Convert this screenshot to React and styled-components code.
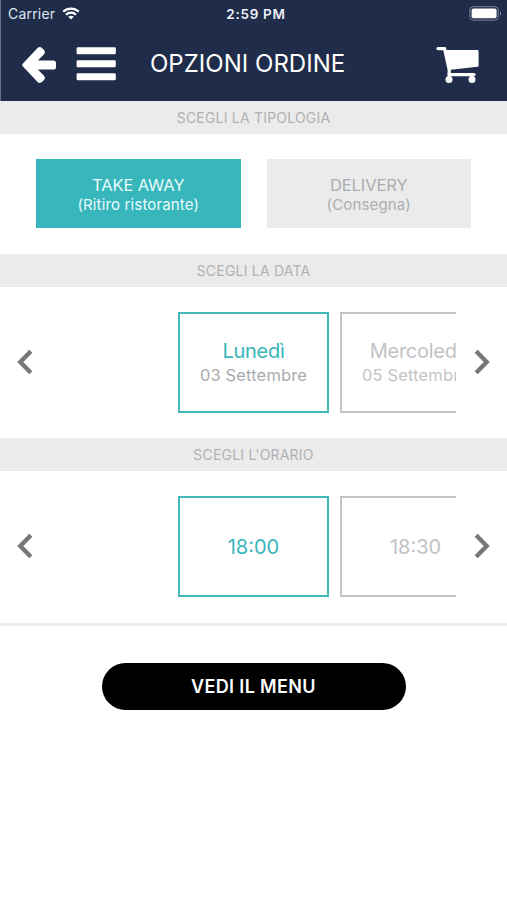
import React from "react";
import styled, { createGlobalStyle } from "styled-components";

const types = [
    { title: "TAKE AWAY", note: "(Ritiro ristorante)", active: true },
    { title: "DELIVERY", note: "(Consegna)", active: false },
];

const dates = [
    { day: "Lunedì", date: "03 Settembre", active: true },
    { day: "Mercoledì", date: "05 Settembre", active: false },
];

const times = [
    { hour: "18:00", active: true },
    { hour: "18:30", active: false },
];

const Chevron = ({ right }) => (
    <ArrowButton $right={right} aria-label={right ? "Avanti" : "Indietro"}>
        <svg width="18" height="28" viewBox="0 0 18 28" fill="none" stroke="#777" strokeWidth="4.4">
            <path d={right ? "M3.2 3.3 13.7 14 3.2 24.7" : "M14.8 3.3 4.3 14 14.8 24.7"} />
        </svg>
    </ArrowButton>
);

const App = () => {

    return(
        <Screen>
            <GlobalStyle />
            <Header>
                <StatusBar>
                    <Carrier>
                        <span>Carrier</span>
                        <svg width="18" height="13" viewBox="0 0 18 13" fill="none" stroke="#fff" strokeWidth="2.2">
                            <path d="M1.2 4.6C5.6.5 12.4.5 16.8 4.6" />
                            <path d="M4 7.7c2.8-2.7 7.2-2.7 10 0" />
                            <path d="M9 12.6 6.2 9.8c1.6-1.5 4-1.5 5.6 0z" fill="#fff" stroke="none" />
                        </svg>
                    </Carrier>
                    <Clock>2:59 PM</Clock>
                    <Battery>
                        <svg width="33" height="15" viewBox="0 0 33 15">
                            <rect x="0.9" y="0.7" width="28.4" height="13.4" rx="3.4" fill="none" stroke="#7d869b" strokeWidth="1" />
                            <rect x="2.6" y="2.5" width="25" height="9.8" rx="1.8" fill="#fff" />
                            <path d="M31 5.2c1.5.6 1.5 3.8 0 4.4z" fill="#7d869b" />
                        </svg>
                    </Battery>
                </StatusBar>
                <NavBar>
                    <NavIcons>
                        <svg width="35" height="38" viewBox="0 0 35 38" fill="#fff">
                            <path d="M.9 17.4 15.6 2q2.2-2 4.6.2l1.6 1.6q2.2 2.4 0 4.6l-6 6h15.6q2.6 0 2.6 2.6v4q0 2.6-2.6 2.6H15.8l6 6q2.2 2.2 0 4.6l-1.6 1.6q-2.4 2.2-4.6.2L.9 20.6q-1.4-1.6 0-3.2z" />
                        </svg>
                        <svg width="40" height="38" viewBox="0 0 40 38" fill="#fff">
                            <rect x="0.6" y="1.2" width="39.2" height="7" rx="1.2" />
                            <rect x="0.6" y="14.3" width="39.2" height="7" rx="1.2" />
                            <rect x="0.6" y="27.2" width="39.2" height="7" rx="1.2" />
                        </svg>
                    </NavIcons>
                    <Title>OPZIONI ORDINE</Title>
                    <Cart>
                        <svg width="44" height="38" viewBox="0 0 44 38" fill="#fff">
                            <path d="M2 2.6h6.6L13.2 24v4.6H38" fill="none" stroke="#fff" strokeWidth="3.2" strokeLinecap="round" strokeLinejoin="round" />
                            <path d="M9.4 4h31.8q1.4 0 1.4 1.4v14q0 1.3-1.2 1.4L12.4 24z" />
                            <circle cx="13" cy="33.5" r="3.5" />
                            <circle cx="36" cy="33.5" r="3.5" />
                            <path d="M11.6 27h3v6h-3zM34.6 28h3v5h-3z" />
                        </svg>
                    </Cart>
                </NavBar>
            </Header>

            <SectionTitle>SCEGLI LA TIPOLOGIA</SectionTitle>
            <TypeRow>
                {types.map((t) => (
                    <TypeButton key={t.title} $active={t.active}>
                        <TypeName>{t.title}</TypeName>
                        <TypeNote>{t.note}</TypeNote>
                    </TypeButton>
                ))}
            </TypeRow>

            <SectionTitle>SCEGLI LA DATA</SectionTitle>
            <Slider>
                <Chevron />
                <Track>
                    {dates.map((d) => (
                        <Card key={d.date} $active={d.active}>
                            <Day>{d.day}</Day>
                            <DateText $active={d.active}>{d.date}</DateText>
                        </Card>
                    ))}
                </Track>
                <Chevron right />
            </Slider>

            <SectionTitle>SCEGLI L'ORARIO</SectionTitle>
            <Slider>
                <Chevron />
                <Track>
                    {times.map((t) => (
                        <Card key={t.hour} $active={t.active}>
                            <Hour>{t.hour}</Hour>
                        </Card>
                    ))}
                </Track>
                <Chevron right />
            </Slider>

            <Footer>
                <MenuButton>VEDI IL MENU</MenuButton>
            </Footer>
        </Screen>
    );
};

const GlobalStyle = createGlobalStyle`
    * {
        box-sizing: border-box;
    }
    body {
        margin: 0;
        background: #fff;
    }
    button {
        font: inherit;
        border: 0;
        padding: 0;
        background: none;
    }
    svg {
        display: block;
    }
`;

const Screen = styled.main`
    width: 507px;
    height: 900px;
    overflow: hidden;
    display: flex;
    flex-direction: column;
    background: #fff;
    font-family: Inter, "Liberation Sans", sans-serif;
`;

const Header = styled.header`
    flex: none;
    height: 101px;
    background: #1f2d4b;
    border-left: 1px solid #68738a;
    color: #fff;
`;

const StatusBar = styled.div`
    height: 27px;
    display: grid;
    grid-template-columns: 1fr auto 1fr;
    align-items: center;
    padding: 0 5px 0 7px;
`;

const Carrier = styled.div`
    display: flex;
    align-items: center;
    gap: 7px;
    font-size: 14px;
    letter-spacing: 0.2px;
    color: #dfe5f0;
`;

const Clock = styled.div`
    padding-left: 2px;
    font-size: 13.5px;
    font-weight: 600;
    letter-spacing: 0.7px;
    color: #eef1f7;
`;

const Battery = styled.div`
    justify-self: end;
`;

const NavBar = styled.nav`
    height: 74px;
    display: flex;
    align-items: flex-start;
    padding: 19px 27px 0 21px;
`;

const NavIcons = styled.div`
    display: flex;
    gap: 19px;
    width: 128px;
`;

const Title = styled.h1`
    flex: 1;
    margin: 0;
    font-size: 24px;
    font-weight: 400;
    line-height: 36px;
    letter-spacing: 0.02px;
    white-space: nowrap;
`;

const Cart = styled.div`
    flex: none;
`;

const SectionTitle = styled.h2`
    flex: none;
    height: 33px;
    margin: 0;
    background: #ebebeb;
    color: #b1b1b4;
    font-size: 14px;
    font-weight: 400;
    line-height: 33px;
    letter-spacing: 0.2px;
    text-align: center;
`;

const TypeRow = styled.section`
    flex: none;
    height: 120px;
    display: flex;
    gap: 26px;
    padding: 25px 36px 26px;
`;

const TypeButton = styled.button`
    flex: 1;
    display: flex;
    flex-direction: column;
    align-items: center;
    justify-content: center;
    padding-top: 2px;
    background: ${(props) => (props.$active ? "#37b6bb" : "#ebebeb")};
    color: ${(props) => (props.$active ? "#e9fbfb" : "#adadb1")};
`;

const TypeName = styled.span`
    font-size: 16.5px;
    line-height: 20px;
    letter-spacing: -0.1px;
`;

const TypeNote = styled.span`
    font-size: 15px;
    line-height: 19px;
    letter-spacing: 0.15px;
`;

const Slider = styled.section`
    flex: none;
    height: 151px;
    display: flex;
    align-items: center;
`;

const ArrowButton = styled.button`
    flex: none;
    width: 51px;
    display: flex;
    justify-content: center;
    padding: ${(props) => (props.$right ? "0 0 2px 1px" : "0 1px 2px 0")};
`;

const Track = styled.div`
    flex: 1;
    display: flex;
    gap: 11px;
    padding-left: 127px;
    overflow: hidden;
`;

const Card = styled.div`
    flex: none;
    width: 151px;
    height: 101px;
    display: flex;
    flex-direction: column;
    align-items: center;
    justify-content: center;
    border: 2px solid ${(props) => (props.$active ? "#45b8bc" : "#c4c4c6")};
    color: ${(props) => (props.$active ? "#37b6bb" : "#c2c2c6")};
`;

const Day = styled.span`
    font-size: 20px;
    line-height: 26px;
    letter-spacing: -0.25px;
`;

const DateText = styled.span`
    font-size: 16.5px;
    line-height: 23px;
    letter-spacing: 0.15px;
    color: ${(props) => (props.$active ? "#aaaaae" : "#c4c4c8")};
`;

const Hour = styled.span`
    font-size: 20px;
`;

const Footer = styled.footer`
    display: flex;
    justify-content: center;
    margin-top: 1px;
    padding-top: 37px;
    border-top: 3px solid #ececec;
`;

const MenuButton = styled.button`
    width: 304px;
    height: 47px;
    border-radius: 24px;
    background: #000;
    color: #fff;
    font-size: 18px;
    font-weight: 600;
    letter-spacing: 0.35px;
`;

export default App;
